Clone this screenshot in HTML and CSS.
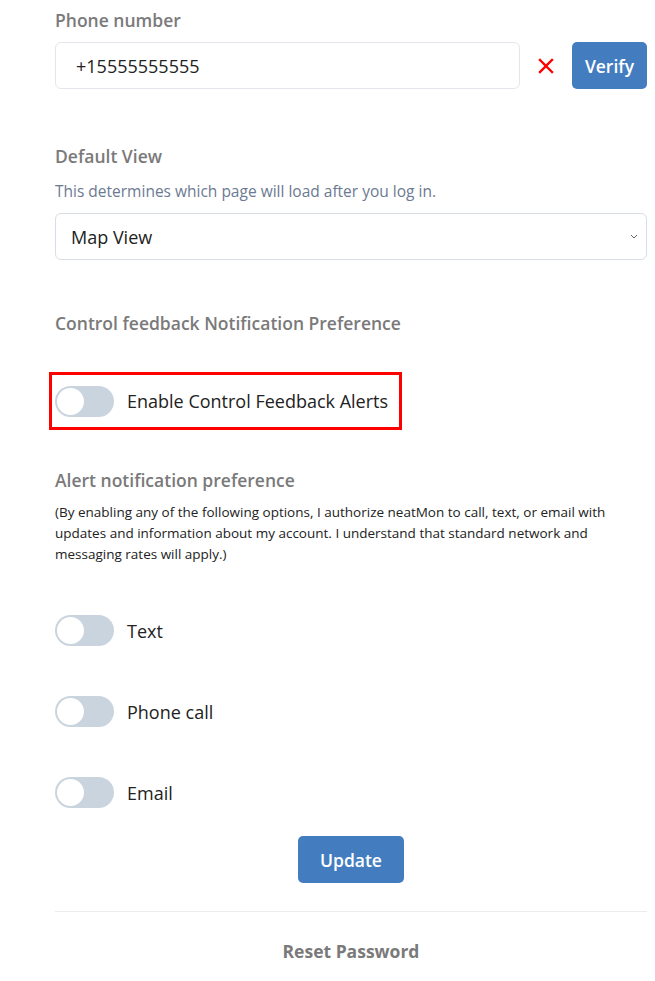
FILE: index.html
```html
<!DOCTYPE html>
<html lang="en">
<head>
    <meta charset="UTF-8">
    <meta name="viewport" content="width=device-width, initial-scale=1.0">
    <title>Account Settings</title>
    <link rel="stylesheet" href="styles.css">
</head>
<body>
    <div class="container">
        <div class="field">
            <label class="field-label">Phone number</label>
            <div class="phone-row">
                <input class="text-input" type="text" value="+15555555555">
                <span class="clear-x">
                    <svg width="16" height="16" viewBox="0 0 16 16"><path d="M2 2 L14 14 M14 2 L2 14" stroke="#f00" stroke-width="2.4" stroke-linecap="square"/></svg>
                </span>
                <button class="btn">Verify</button>
            </div>
        </div>

        <div class="field view-field">
            <label class="field-label">Default View</label>
            <p class="hint">This determines which page will load after you log in.</p>
            <div class="select-box">
                <span>Map View</span>
                <svg class="chevron" width="8" height="5" viewBox="0 0 8 5"><path d="M1 1 L4 4 L7 1" fill="none" stroke="#666" stroke-width="1"/></svg>
            </div>
        </div>

        <div class="field feedback-field">
            <label class="field-label">Control feedback Notification Preference</label>
            <div class="highlight">
                <div class="switch-row">
                    <span class="switch"><span class="knob"></span></span>
                    <span class="switch-label">Enable Control Feedback Alerts</span>
                </div>
            </div>
        </div>

        <div class="field alert-field">
            <label class="field-label">Alert notification preference</label>
            <p class="consent">(By enabling any of the following options, I authorize neatMon to call, text, or email with updates and information about my account. I understand that standard network and messaging rates will apply.)</p>
            <div class="switch-list">
                <div class="switch-row">
                    <span class="switch"><span class="knob"></span></span>
                    <span class="switch-label">Text</span>
                </div>
                <div class="switch-row">
                    <span class="switch"><span class="knob"></span></span>
                    <span class="switch-label">Phone call</span>
                </div>
                <div class="switch-row">
                    <span class="switch"><span class="knob"></span></span>
                    <span class="switch-label">Email</span>
                </div>
            </div>
        </div>

        <div class="actions">
            <button class="btn update">Update</button>
        </div>
        <hr class="divider">
        <div class="reset">Reset Password</div>
    </div>
</body>
</html>
```

FILE: styles.css
```css
body {
    margin: 0;
    padding: 0;
    font-family: 'Open Sans', sans-serif;
    background: #fff;
    color: #222;
}
.container {
    padding: 8px 8px 0 55px;
}
.field-label {
    display: block;
    font-size: 17.5px;
    font-weight: 600;
    color: #7a7a7a;
    line-height: 24px;
}
.phone-row {
    display: flex;
    align-items: center;
    margin-top: 10px;
}
.text-input {
    flex: 1;
    height: 47px;
    box-sizing: border-box;
    border: 1px solid #e3e6ec;
    border-radius: 6px;
    padding: 0 20px;
    font-family: inherit;
    font-size: 18px;
    color: #222;
}
.clear-x {
    width: 52px;
    display: flex;
    justify-content: center;
}
.btn {
    background-color: #437dc0;
    color: white;
    border: none;
    border-radius: 5px;
    font-family: inherit;
    font-size: 17.5px;
    font-weight: 600;
    height: 47px;
    padding: 0 13px;
    cursor: pointer;
}
.view-field {
    margin-top: 55px;
}
.hint {
    margin: 12px 0 0;
    font-size: 15.5px;
    color: #6c7a91;
    line-height: 22px;
}
.select-box {
    margin-top: 11px;
    height: 47px;
    box-sizing: border-box;
    border: 1px solid #d8dde6;
    border-radius: 6px;
    padding: 0 8px 0 15px;
    display: flex;
    align-items: center;
    justify-content: space-between;
    font-size: 18px;
}
.feedback-field {
    margin-top: 51px;
}
.highlight {
    margin: 37px 0 0 -6px;
    width: 353px;
    height: 58px;
    box-sizing: border-box;
    border: 3px solid #f00;
    padding-left: 3px;
    display: flex;
    align-items: center;
}
.switch-row {
    display: flex;
    align-items: center;
}
.switch {
    width: 59px;
    height: 31px;
    border-radius: 16px;
    background: #cad4df;
    display: inline-flex;
    align-items: center;
    padding: 0 2px;
    box-sizing: border-box;
    margin-right: 13px;
}
.knob {
    width: 27px;
    height: 27px;
    border-radius: 50%;
    background: #fff;
}
.switch-label {
    font-size: 18px;
    color: #222;
}
.alert-field {
    margin-top: 38px;
}
.consent {
    margin: 10px 0 0;
    font-size: 13.5px;
    line-height: 21px;
    color: #222;
}
.switch-list {
    margin-top: 50px;
    display: flex;
    flex-direction: column;
    gap: 50px;
}
.actions {
    text-align: center;
    margin-top: 28px;
}
.update {
    padding: 0 22px;
}
.divider {
    border: none;
    border-top: 1px solid #ececec;
    margin: 28px 0 0;
}
.reset {
    text-align: center;
    font-size: 17.5px;
    font-weight: 700;
    color: #7a7a7a;
    margin-top: 27px;
}
```
